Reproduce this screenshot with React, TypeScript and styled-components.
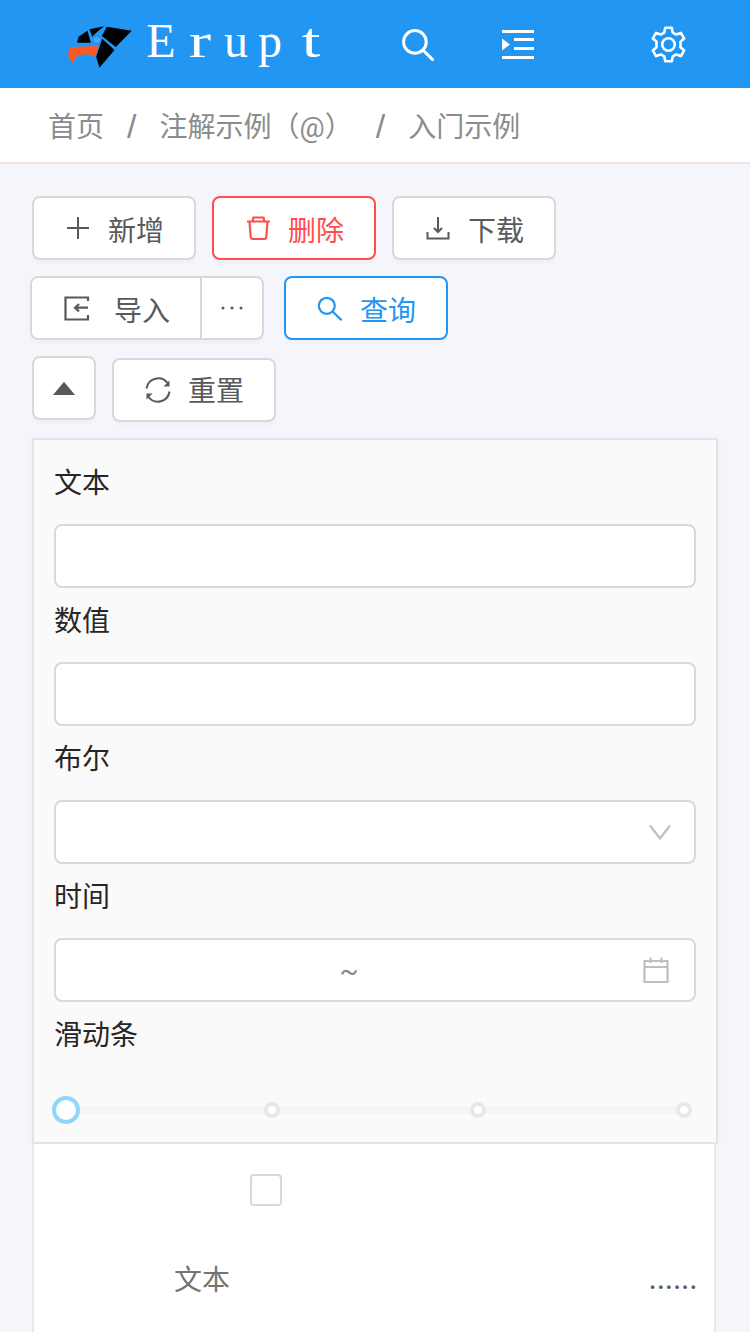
import React from "react";
import styled, { createGlobalStyle } from "styled-components";

const Global = createGlobalStyle`
  html, body { margin: 0; padding: 0; background: #f4f6fb; }
  * { box-sizing: border-box; }
  body { font-family: "Roboto", "Noto Sans CJK SC", "Noto Sans", sans-serif; }
`;

const Page = styled.div`
  width: 750px;
  height: 1332px;
  overflow: hidden;
  background: #f4f6fb;
`;

const Header = styled.header`
  height: 88px;
  background: #2196f3;
  display: flex;
  align-items: center;
  padding-left: 67px;
  color: #fff;
`;

const LogoMark = styled.svg`
  width: 67px;
  height: 44px;
  display: block;
  margin-top: 6px;
`;

const Brand = styled.span`
  display: flex;
  font-family: "Liberation Serif", serif;
  font-size: 48px;
  line-height: 88px;
  margin-left: 9px;
  margin-top: -6px;
`;

const Letter = styled.span<{ $w: number; $stretch?: number }>`
  display: block;
  width: ${(p) => p.$w}px;
  text-align: center;
  transform: scaleX(${(p) => p.$stretch ?? 1});
`;

const HeaderIcon = styled.span<{ $left: number }>`
  margin-left: ${(p) => p.$left}px;
  display: flex;
`;

const Crumbs = styled.nav`
  height: 76px;
  background: #fff;
  border-bottom: 2px solid #f0e4e4;
  display: flex;
  align-items: center;
  padding: 0 0 0 48px;
  font-size: 28px;
  color: #8c8c8c;
`;

const Crumb = styled.span`
  white-space: nowrap;
`;

const CrumbSep = styled.span`
  width: 55.5px;
  text-align: center;
  font-size: 34px;
  font-family: "Liberation Sans", sans-serif;
  margin-top: 3px;
`;

const Toolbar = styled.div`
  padding: 32px 0 0 32px;
  display: flex;
  flex-direction: column;
  align-items: flex-start;
  gap: 16px;
`;

const Row = styled.div<{ $gap?: number; $shift?: number }>`
  display: flex;
  align-items: flex-start;
  gap: ${(p) => p.$gap ?? 16}px;
  margin-left: ${(p) => p.$shift ?? 0}px;
`;

const Button = styled.button<{ $tone?: "red" | "blue"; $down?: boolean }>`
  width: 164px;
  height: 64px;
  border-radius: 8px;
  background: #fff;
  border: 2px solid
    ${(p) => (p.$tone === "red" ? "#ff4d4f" : p.$tone === "blue" ? "#2196f3" : "#d9d9d9")};
  color: ${(p) => (p.$tone === "red" ? "#ff4d4f" : p.$tone === "blue" ? "#2196f3" : "#595959")};
  display: flex;
  align-items: center;
  justify-content: center;
  gap: 16px;
  padding: 0;
  font: inherit;
  font-size: 28px;
  line-height: 40px;
  box-shadow: 0 4px 0 rgba(0, 0, 0, 0.015);
  margin-top: ${(p) => (p.$down ? 2 : 0)}px;
`;

const SquareButton = styled(Button)`
  width: 64px;
`;

const ButtonText = styled.span<{ $lift?: number }>`
  padding-top: ${(p) => p.$lift ?? 8}px;
`;

const ButtonGroup = styled.div`
  display: flex;
  width: 234px;
  height: 64px;
  background: #fff;
  border: 2px solid #d9d9d9;
  border-radius: 8px;
  box-shadow: 0 4px 0 rgba(0, 0, 0, 0.015);
  color: #595959;
  font-size: 28px;
  line-height: 40px;
`;

const GroupMain = styled.div`
  width: 170px;
  border-right: 2px solid #d9d9d9;
  display: flex;
  align-items: center;
  justify-content: center;
  gap: 24px;
`;

const GroupMore = styled.div`
  flex: 1;
  display: flex;
  align-items: center;
  justify-content: center;
`;

const Panel = styled.section`
  margin: 16px 0 0 32px;
  width: 686px;
  height: 706px;
  background: #fafafa;
  border: 2px solid #e4e4e4;
  padding: 10px 20px 0;
  box-shadow: 0 0 6px rgba(0, 0, 0, 0.03);
`;

const Label = styled.div`
  height: 74px;
  line-height: 68px;
  font-size: 28px;
  color: #262626;
`;

const Control = styled.div<{ $right?: number }>`
  height: 64px;
  background: #fff;
  border: 2px solid #d9d9d9;
  border-radius: 8px;
  display: flex;
  align-items: center;
  justify-content: flex-end;
  padding-right: ${(p) => p.$right ?? 24}px;
`;

const Tilde = styled.span`
  flex: 1;
  text-align: center;
  color: #8c8c8c;
  font-size: 28px;
`;

const Slider = styled.div`
  position: relative;
  height: 28px;
  margin: 20px 0 0 -2px;
  display: flex;
  align-items: center;
  justify-content: space-between;
  width: 646px;
`;

const Track = styled.div`
  position: absolute;
  left: 14px;
  right: 14px;
  top: 10px;
  height: 8px;
  background: #f5f5f5;
  border-radius: 4px;
`;

const Stop = styled.span`
  position: relative;
  width: 28px;
  height: 28px;
  display: flex;
  align-items: center;
  justify-content: center;
`;

const Handle = styled.span`
  width: 28px;
  height: 28px;
  border-radius: 50%;
  background: #fff;
  border: 4px solid #91d5ff;
`;

const Mark = styled.span`
  width: 16px;
  height: 16px;
  border-radius: 50%;
  background: #fff;
  border: 4px solid #e8e8e8;
`;

const TableBody = styled.div`
  margin-left: 32px;
  width: 684px;
  height: 300px;
  background: #fff;
  border-left: 2px solid #e8e8e8;
  border-right: 2px solid #e8e8e8;
  padding-top: 30px;
`;

const CheckRow = styled.div`
  height: 32px;
  padding-left: 216px;
`;

const CheckBox = styled.span`
  display: block;
  width: 32px;
  height: 32px;
  border: 2px solid #d9d9d9;
  border-radius: 4px;
  background: #fff;
`;

const HeadRow = styled.div`
  display: grid;
  grid-template-columns: 336px 1fr;
  align-items: center;
  margin-top: 52px;
  height: 40px;
  padding-right: 16px;
`;

const HeadCell = styled.span`
  text-align: center;
  font-size: 28px;
  color: #737373;
`;

const More = styled.span`
  justify-self: end;
  font-family: "Lato", sans-serif;
  font-size: 28px;
  letter-spacing: 1.5px;
  color: #595959;
  line-height: 40px;
`;

const Svg = styled.svg<{ $size?: number }>`
  width: ${(p) => p.$size ?? 28}px;
  height: ${(p) => p.$size ?? 28}px;
  display: block;
  flex: none;
`;

const line = { fill: "none", stroke: "currentColor", strokeWidth: 2 } as const;

const Plus = () => (
  <Svg viewBox="0 0 28 28"><path d="M14 3v22M3 14h22" {...line} /></Svg>
);
const Trash = () => (
  <Svg viewBox="0 0 28 28">
    <path d="M3 7.500h23M5.500 7.500l1.200 15.500q.2 2 2.200 2h11.200q2 0 2.200-2l1.200-15.500M8.500 7.500l1-4h10l1 4" {...line} strokeWidth={2.2} />
  </Svg>
);
const Download = () => (
  <Svg viewBox="0 0 28 28">
    <path d="M14 3v15M10 14l4 4 4-4M3.500 18v6.500h21V18" {...line} />
  </Svg>
);
const ImportIcon = () => (
  <Svg viewBox="0 0 28 28">
    <path d="M26 7V3.500H3.500v22H26V21" {...line} strokeWidth={2.2} />
    <path d="M26 13.700H13.500M17 10l-4 3.700 4 3.700" {...line} strokeWidth={2.2} />
  </Svg>
);
const HeaderSearch = () => (
  <Svg $size={33} viewBox="0 0 28 28">
    <circle cx="11.800" cy="11.800" r="9.600" {...line} strokeWidth={2.5} />
    <path d="M18.800 18.800l8 8" {...line} strokeWidth={2.5} strokeLinecap="round" />
  </Svg>
);
const ButtonSearch = () => (
  <Svg viewBox="0 0 28 28">
    <circle cx="10.800" cy="11.800" r="8" {...line} strokeWidth={2.2} />
    <path d="M16.800 17.800l8.200 7.800" {...line} strokeWidth={2.2} strokeLinecap="round" />
  </Svg>
);
const Dots = () => (
  <Svg viewBox="0 0 28 28" fill="currentColor">
    <circle cx="5" cy="14" r="1.500" /><circle cx="14" cy="14" r="1.500" /><circle cx="23" cy="14" r="1.500" />
  </Svg>
);
const CaretUp = () => (
  <Svg viewBox="0 0 28 28" fill="currentColor"><path d="M14 7.700L25 21H3z" /></Svg>
);
const Sync = () => (
  <Svg viewBox="0 0 28 28">
    <path d="M2.500 12.500A11.800 11.800 0 0 1 23.500 7M25.500 15.500A11.800 11.800 0 0 1 4.500 21" {...line} />
    <path d="M25.500 4.500v6h-6zM2.500 23.500v-6h6z" fill="currentColor" />
  </Svg>
);
const Chevron = () => (
  <Svg viewBox="0 0 28 28"><path d="M4 7.500l10 13 10-13" fill="none" stroke="#bfbfbf" strokeWidth="2.200" /></Svg>
);
const Calendar = () => (
  <Svg viewBox="0 0 28 28">
    <path d="M2.500 5h23v21h-23zM2.500 11h23M8.500 1.500V7M19.500 1.500V7" fill="none" stroke="#bfbfbf" strokeWidth="2.200" />
  </Svg>
);
const MenuUnfold = () => (
  <Svg $size={34} viewBox="0 0 34 34" fill="#fff">
    <path d="M1 3h32v3H1zM13 11h20v3H13zM13 20h20v3H13zM1 29h32v3H1zM1 11.500l8 6-8 6z" />
  </Svg>
);
const Gear = () => (
  <Svg $size={39} viewBox="0 0 36 36">
    <path
      d="M15 2.500h6l.9 4.500 3.200 1.800 4.400-1.500 3 5.200-3.500 3q.3 2.500 0 5l3.500 3-3 5.200-4.400-1.500-3.200 1.800-.9 4.500h-6l-.9-4.500-3.200-1.800-4.400 1.500-3-5.200 3.500-3q-.3-2.500 0-5l-3.500-3 3-5.200 4.400 1.500 3.200-1.800z"
      fill="none" stroke="#fff" strokeWidth="2.400" strokeLinejoin="round"
    />
    <circle cx="18" cy="18" r="5.800" fill="none" stroke="#fff" strokeWidth="2.400" />
  </Svg>
);
const Logo = () => (
  <LogoMark viewBox="201 75 200 132">
    <path d="M320 80L395 92 347 141 305 108z" fill="#000" />
    <path d="M343 150L298 203 288 170 299 137 306 116z" fill="#000" />
    <path d="M268 88L312 79 288 98 276 110z" fill="#000" />
    <path d="M262 92L272 128H231L235 110z" fill="#000" />
    <path d="M212 141L294 138 286 170Q250 155 226 172L218 190 205 172Q202 155 212 141z" fill="#ff5722" />
    <path d="M290 107L303 116 298 130H282L277 116z" fill="#4aa8f0" stroke="#1a7fd0" strokeWidth="2" />
  </LogoMark>
);

const Field = ({ label, children }: { label: string; children?: React.ReactNode }) => (
  <>
    <Label>{label}</Label>
    {children}
  </>
);

export default function App() {
  return (
    <Page>
      <Global />
      <Header>
        <Logo />
        <Brand>
          <Letter $w={36}>E</Letter>
          <Letter $w={42} $stretch={1.4}>r</Letter>
          <Letter $w={30}>u</Letter>
          <Letter $w={38}>p</Letter>
          <Letter $w={44} $stretch={1.4}>t</Letter>
        </Brand>
        <HeaderIcon $left={68}><HeaderSearch /></HeaderIcon>
        <HeaderIcon $left={67}><MenuUnfold /></HeaderIcon>
        <HeaderIcon $left={114}><Gear /></HeaderIcon>
      </Header>
      <Crumbs>
        <Crumb>首页</Crumb>
        <CrumbSep>/</CrumbSep>
        <Crumb>注解示例（@）</Crumb>
        <CrumbSep>/</CrumbSep>
        <Crumb>入门示例</Crumb>
      </Crumbs>
      <Toolbar>
        <Row>
          <Button><Plus /><ButtonText>新增</ButtonText></Button>
          <Button $tone="red"><Trash /><ButtonText>删除</ButtonText></Button>
          <Button><Download /><ButtonText>下载</ButtonText></Button>
        </Row>
        <Row $gap={20} $shift={-2}>
          <ButtonGroup>
            <GroupMain><ImportIcon /><ButtonText>导入</ButtonText></GroupMain>
            <GroupMore><Dots /></GroupMore>
          </ButtonGroup>
          <Button $tone="blue"><ButtonSearch /><ButtonText>查询</ButtonText></Button>
        </Row>
        <Row>
          <SquareButton><CaretUp /></SquareButton>
          <Button $down><Sync /><ButtonText $lift={4}>重置</ButtonText></Button>
        </Row>
      </Toolbar>
      <Panel>
        <Field label="文本"><Control /></Field>
        <Field label="数值"><Control /></Field>
        <Field label="布尔"><Control $right={20}><Chevron /></Control></Field>
        <Field label="时间">
          <Control><Tilde>~</Tilde><Calendar /></Control>
        </Field>
        <Field label="滑动条" />
        <Slider>
          <Track />
          <Stop><Handle /></Stop>
          <Stop><Mark /></Stop>
          <Stop><Mark /></Stop>
          <Stop><Mark /></Stop>
        </Slider>
      </Panel>
      <TableBody>
        <CheckRow><CheckBox /></CheckRow>
        <HeadRow>
          <HeadCell>文本</HeadCell>
          <More>......</More>
        </HeadRow>
      </TableBody>
    </Page>
  );
}
